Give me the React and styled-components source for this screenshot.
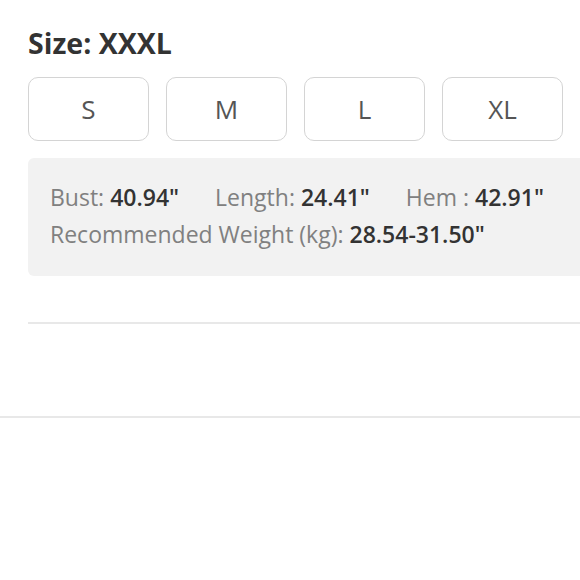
import styled, { createGlobalStyle } from 'styled-components';

const Global = createGlobalStyle`
  html, body {
    margin: 0;
    padding: 0;
    background: #fff;
    font-family: "Open Sans", "Noto Sans", sans-serif;
  }
`;

const Page = styled.div`
  width: 580px;
  height: 580px;
  overflow: hidden;
`;

const Section = styled.div`
  padding: 24px 0 0 28px;
`;

const Title = styled.div`
  font-size: 28.5px;
  font-weight: 700;
  color: #333;
  line-height: 38px;
`;

const SizeRow = styled.div`
  display: flex;
  gap: 17px;
  margin-top: 15px;
  white-space: nowrap;
`;

const SizeButton = styled.div`
  flex: 0 0 121px;
  height: 64px;
  box-sizing: border-box;
  border: 1.5px solid #d4d4d4;
  border-radius: 10px;
  display: flex;
  align-items: center;
  justify-content: center;
  font-size: 26px;
  color: #555;
`;

const InfoBox = styled.div`
  margin-top: 17px;
  background: #f2f2f2;
  border-radius: 6px 0 0 6px;
  height: 118px;
  box-sizing: border-box;
  padding: 21px 22px;
  font-size: 23px;
  line-height: 37px;
  color: #808080;
  white-space: nowrap;
`;

const Line = styled.div``;

const Item = styled.span`
  margin-right: ${(p) => p.$gap || 0}px;
`;

const Value = styled.b`
  font-weight: 600;
  color: #333;
`;

const Divider = styled.hr`
  border: 0;
  border-top: 2px solid #e8e8e8;
  margin: ${(p) => p.$top}px 0 0 ${(p) => p.$left}px;
`;

const sizes = ['S', 'M', 'L', 'XL', 'XXL'];

export default function App() {
  return (
    <Page>
      <Global />
      <Section>
        <Title>Size: XXXL</Title>
        <SizeRow>
          {sizes.map((s) => (
            <SizeButton key={s}>{s}</SizeButton>
          ))}
        </SizeRow>
        <InfoBox>
          <Line>
            <Item $gap={36}>
              Bust: <Value>40.94"</Value>
            </Item>
            <Item $gap={36}>
              Length: <Value>24.41"</Value>
            </Item>
            <Item>
              Hem : <Value>42.91"</Value>
            </Item>
          </Line>
          <Line>
            Recommended Weight (kg): <Value>28.54-31.50"</Value>
          </Line>
        </InfoBox>
        <Divider $top={46} $left={0} />
      </Section>
      <Divider $top={92} $left={0} />
    </Page>
  );
}
